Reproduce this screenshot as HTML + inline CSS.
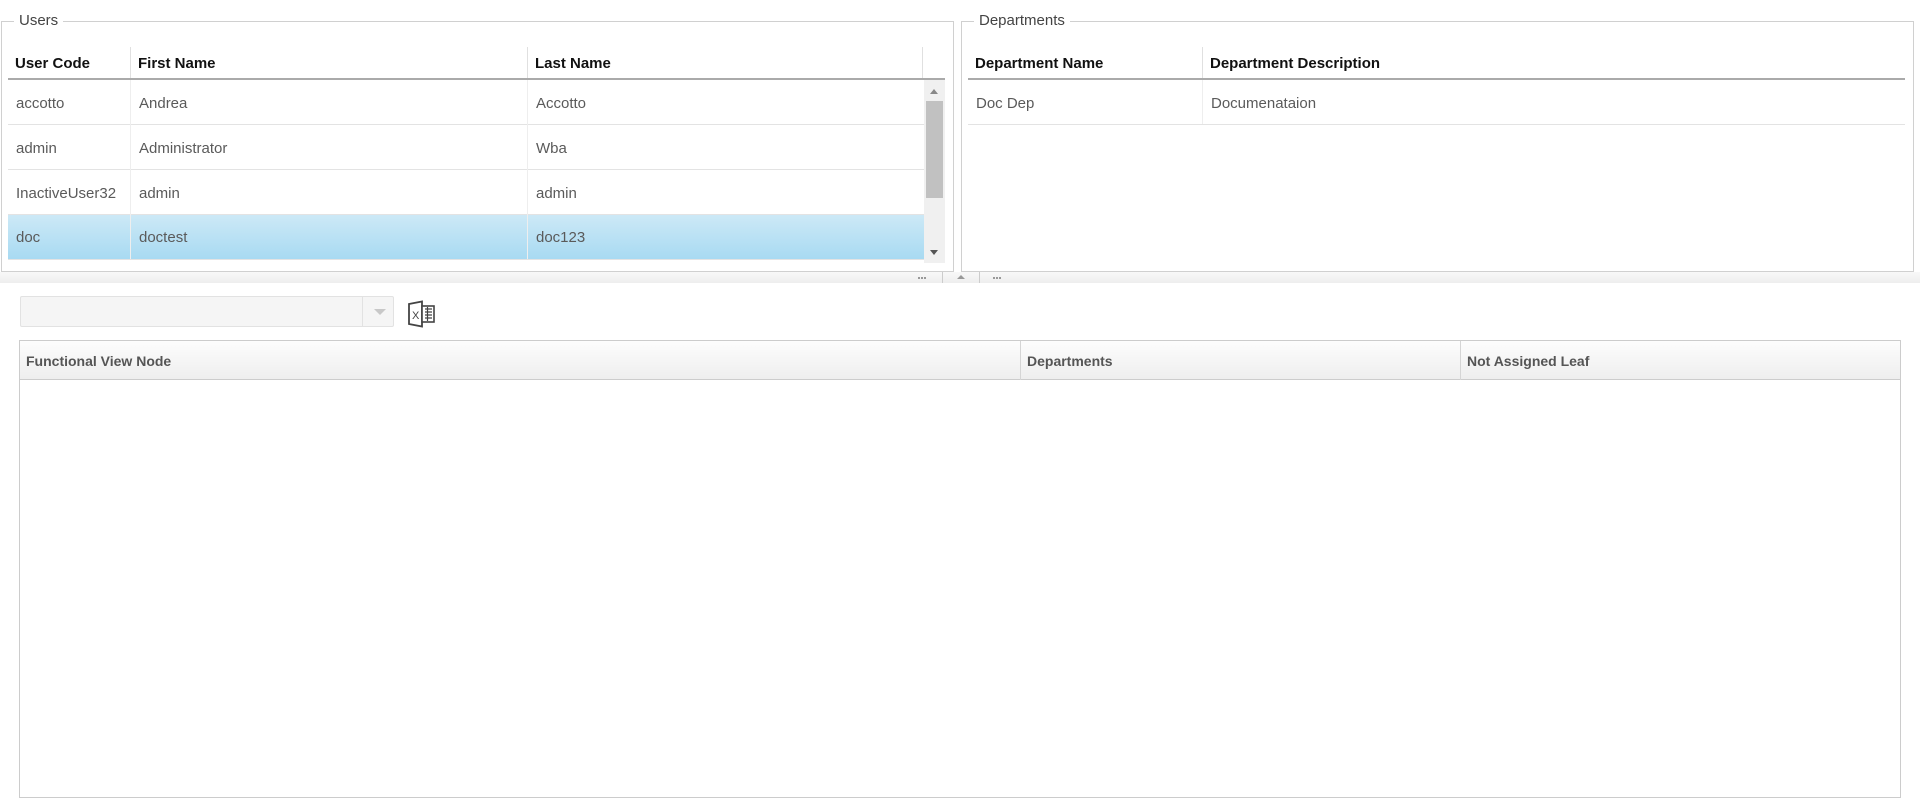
<!DOCTYPE html>
<html><head><style>
*{box-sizing:border-box;margin:0;padding:0}
body{width:1920px;height:798px;background:#fff;position:relative;overflow:hidden;font-family:"Liberation Sans",sans-serif}
.abs{position:absolute}
.fs{position:absolute;border:1px solid #d0d0d0;border-top:1px solid #d0d0d0}
.leg{position:absolute;top:-10px;background:#fff;padding:0 5px;font-size:15px;color:#444;line-height:18px}
.hd{position:absolute;font-weight:bold;font-size:15px;color:#111;line-height:32px;padding-left:7px}
.cell{position:absolute;font-size:15px;color:#5a5a5a;line-height:45px;padding-left:8px}
.vs{position:absolute;width:1px;background:#ddd}
.hs{position:absolute;height:1px;background:#e3e3e3}
.gh{position:absolute;font-weight:bold;font-size:14px;color:#555;line-height:40px;padding-left:6px}
.dot{position:absolute;width:2px;height:2px;background:#999}
</style></head><body>
<div class="fs" style="left:1px;top:21px;width:953px;height:251px">
<div class="leg" style="left:12px">Users</div>
</div>
<div class="vs" style="left:130px;top:47px;height:32px;background:#e0e0e0"></div>
<div class="vs" style="left:527px;top:47px;height:32px;background:#e0e0e0"></div>
<div class="vs" style="left:922px;top:47px;height:32px;background:#e0e0e0"></div>
<div class="hd" style="left:8px;top:48px">User Code</div>
<div class="hd" style="left:131px;top:48px">First Name</div>
<div class="hd" style="left:528px;top:48px">Last Name</div>
<div class="abs" style="left:8px;top:78px;width:937px;height:2px;background:#aaa"></div>
<div class="abs" style="left:8px;top:214px;width:916px;height:45px;background:linear-gradient(#cde9f6,#a8daf2)"></div>
<div class="hs" style="left:8px;top:124px;width:916px"></div>
<div class="hs" style="left:8px;top:169px;width:916px"></div>
<div class="hs" style="left:8px;top:214px;width:916px"></div>
<div class="hs" style="left:8px;top:259px;width:916px"></div>
<div class="vs" style="left:130px;top:80px;height:179px;background:#eee"></div>
<div class="vs" style="left:527px;top:80px;height:179px;background:#eee"></div>
<div class="cell" style="left:8px;top:81px">accotto</div>
<div class="cell" style="left:131px;top:81px">Andrea</div>
<div class="cell" style="left:528px;top:81px">Accotto</div>
<div class="cell" style="left:8px;top:126px">admin</div>
<div class="cell" style="left:131px;top:126px">Administrator</div>
<div class="cell" style="left:528px;top:126px">Wba</div>
<div class="cell" style="left:8px;top:171px">InactiveUser32</div>
<div class="cell" style="left:131px;top:171px">admin</div>
<div class="cell" style="left:528px;top:171px">admin</div>
<div class="cell" style="left:8px;top:215px">doc</div>
<div class="cell" style="left:131px;top:215px">doctest</div>
<div class="cell" style="left:528px;top:215px">doc123</div>
<div class="abs" style="left:924px;top:80px;width:21px;height:183px;background:#f0f0f0"></div>
<div class="abs" style="left:926px;top:101px;width:17px;height:97px;background:#c1c1c1"></div>
<div class="abs" style="left:930px;top:89px;width:0;height:0;border-left:4px solid transparent;border-right:4px solid transparent;border-bottom:5px solid #888"></div>
<div class="abs" style="left:930px;top:250px;width:0;height:0;border-left:4px solid transparent;border-right:4px solid transparent;border-top:5px solid #555"></div>

<div class="fs" style="left:961px;top:21px;width:953px;height:251px">
<div class="leg" style="left:12px">Departments</div>
</div>
<div class="vs" style="left:1202px;top:47px;height:32px;background:#e0e0e0"></div>
<div class="hd" style="left:968px;top:48px">Department Name</div>
<div class="hd" style="left:1203px;top:48px">Department Description</div>
<div class="abs" style="left:968px;top:78px;width:937px;height:2px;background:#aaa"></div>
<div class="hs" style="left:968px;top:124px;width:937px"></div>
<div class="vs" style="left:1202px;top:80px;height:44px;background:#eee"></div>
<div class="cell" style="left:968px;top:81px">Doc Dep</div>
<div class="cell" style="left:1203px;top:81px">Documenataion</div>

<div class="abs" style="left:0;top:272px;width:1920px;height:11px;background:linear-gradient(#f8f8f8,#eee)"></div>
<div class="abs" style="left:942px;top:272px;width:1px;height:11px;background:#ccc"></div>
<div class="abs" style="left:979px;top:272px;width:1px;height:11px;background:#ccc"></div>
<div class="dot" style="left:918px;top:277px"></div><div class="dot" style="left:921px;top:277px"></div><div class="dot" style="left:924px;top:277px"></div>
<div class="dot" style="left:993px;top:277px"></div><div class="dot" style="left:996px;top:277px"></div><div class="dot" style="left:999px;top:277px"></div>
<div class="abs" style="left:957px;top:275px;width:0;height:0;border-left:4px solid transparent;border-right:4px solid transparent;border-bottom:4px solid #999"></div>

<div class="abs" style="left:20px;top:296px;width:374px;height:31px;background:#f5f5f5;border:1px solid #e2e2e2;border-radius:2px"></div>
<div class="abs" style="left:362px;top:297px;width:1px;height:29px;background:#e2e2e2"></div>
<div class="abs" style="left:374px;top:309px;width:0;height:0;border-left:6px solid transparent;border-right:6px solid transparent;border-top:6px solid #c8c8c8"></div>
<svg class="abs" style="left:407px;top:300px" width="29" height="28" viewBox="0 0 29 28">
<path d="M2 4 L15 1.5 L15 26.5 L2 24 Z" fill="#fff" stroke="#444" stroke-width="1.8"/>
<text x="5" y="19" font-family="Liberation Sans,sans-serif" font-size="11" fill="#444">X</text>
<rect x="15" y="6" width="12" height="16" fill="#fff" stroke="#444" stroke-width="1.6"/>
<path d="M18 9h7M18 12h7M18 15h7M18 18h7M20.5 7v14" stroke="#444" stroke-width="1.2"/>
</svg>

<div class="abs" style="left:19px;top:340px;width:1882px;height:458px;border:1px solid #ccc"></div>
<div class="abs" style="left:20px;top:341px;width:1880px;height:39px;background:linear-gradient(#fdfdfd,#eee);border-bottom:1px solid #ccc"></div>
<div class="vs" style="left:1020px;top:341px;height:39px;background:#d5d5d5"></div>
<div class="vs" style="left:1460px;top:341px;height:39px;background:#d5d5d5"></div>
<div class="gh" style="left:20px;top:341px">Functional View Node</div>
<div class="gh" style="left:1021px;top:341px">Departments</div>
<div class="gh" style="left:1461px;top:341px">Not Assigned Leaf</div>
</body></html>
